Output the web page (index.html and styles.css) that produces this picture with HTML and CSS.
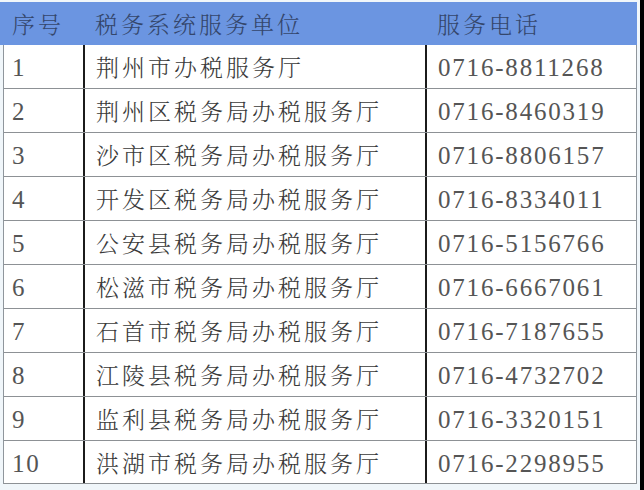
FILE: index.html
```html
<!DOCTYPE html>
<html lang="zh">
<head>
<meta charset="utf-8">
<link rel="stylesheet" href="styles.css">
</head>
<body>
<div class="page">
  <div class="head">
    <div class="hc c1">序号</div>
    <div class="hc c2">税务系统服务单位</div>
    <div class="hc c3">服务电话</div>
  </div>
  <div class="body">
    <div class="row"><div class="cell c1 num">1</div><div class="cell c2">荆州市办税服务厅</div><div class="cell c3 num">0716-8811268</div></div>
    <div class="row"><div class="cell c1 num">2</div><div class="cell c2">荆州区税务局办税服务厅</div><div class="cell c3 num">0716-8460319</div></div>
    <div class="row"><div class="cell c1 num">3</div><div class="cell c2">沙市区税务局办税服务厅</div><div class="cell c3 num">0716-8806157</div></div>
    <div class="row"><div class="cell c1 num">4</div><div class="cell c2">开发区税务局办税服务厅</div><div class="cell c3 num">0716-8334011</div></div>
    <div class="row"><div class="cell c1 num">5</div><div class="cell c2">公安县税务局办税服务厅</div><div class="cell c3 num">0716-5156766</div></div>
    <div class="row"><div class="cell c1 num">6</div><div class="cell c2">松滋市税务局办税服务厅</div><div class="cell c3 num">0716-6667061</div></div>
    <div class="row"><div class="cell c1 num">7</div><div class="cell c2">石首市税务局办税服务厅</div><div class="cell c3 num">0716-7187655</div></div>
    <div class="row"><div class="cell c1 num">8</div><div class="cell c2">江陵县税务局办税服务厅</div><div class="cell c3 num">0716-4732702</div></div>
    <div class="row"><div class="cell c1 num">9</div><div class="cell c2">监利县税务局办税服务厅</div><div class="cell c3 num">0716-3320151</div></div>
    <div class="row last"><div class="cell c1 num">10</div><div class="cell c2">洪湖市税务局办税服务厅</div><div class="cell c3 num">0716-2298955</div></div>
  </div>
</div>
</body>
</html>
```
FILE: styles.css
```css
html, body {
  margin: 0;
  padding: 0;
  background: #000;
}
.page {
  width: 640px;
  height: 490px;
  background: #f0f6fa;
  padding-top: 2px;
  box-sizing: border-box;
  font-family: "Noto Serif CJK SC", "Noto Sans CJK SC", serif;
}
.head {
  width: 637px;
  height: 43px;
  background: #6b95e1;
  display: grid;
  grid-template-columns: 83px 342px 1fr;
  align-items: center;
}
.hc {
  font-size: 23px;
  font-weight: 300;
  letter-spacing: 3px;
  color: #34466b;
  padding-left: 12px;
  line-height: 1;
}
.body {
  margin-left: 3px;
  width: 634px;
  border-left: 1px solid #8f969c;
  border-right: 1px solid #8f969c;
  background: #fff;
  box-sizing: border-box;
}
.row {
  height: 44px;
  display: grid;
  grid-template-columns: 79px 342px 1fr;
  border-bottom: 1px solid #8d9195;
  box-sizing: border-box;
}
.row.last { height: 43px; }
.cell {
  display: flex;
  align-items: center;
  font-size: 23px;
  font-weight: 300;
  letter-spacing: 3px;
  color: #3a3a3a;
  line-height: 1;
}
.cell.c1 { padding-left: 8px; }
.cell.c2 {
  padding-left: 11px;
  border-left: 2px solid #1b1b1b;
}
.cell.c3 {
  padding-left: 11px;
  border-left: 2px solid #1b1b1b;
}
.num {
  font-family: "Liberation Serif", serif;
  font-size: 25px;
  font-weight: 400;
  letter-spacing: 1.8px;
  color: #555;
  padding-top: 2px;
}
```
